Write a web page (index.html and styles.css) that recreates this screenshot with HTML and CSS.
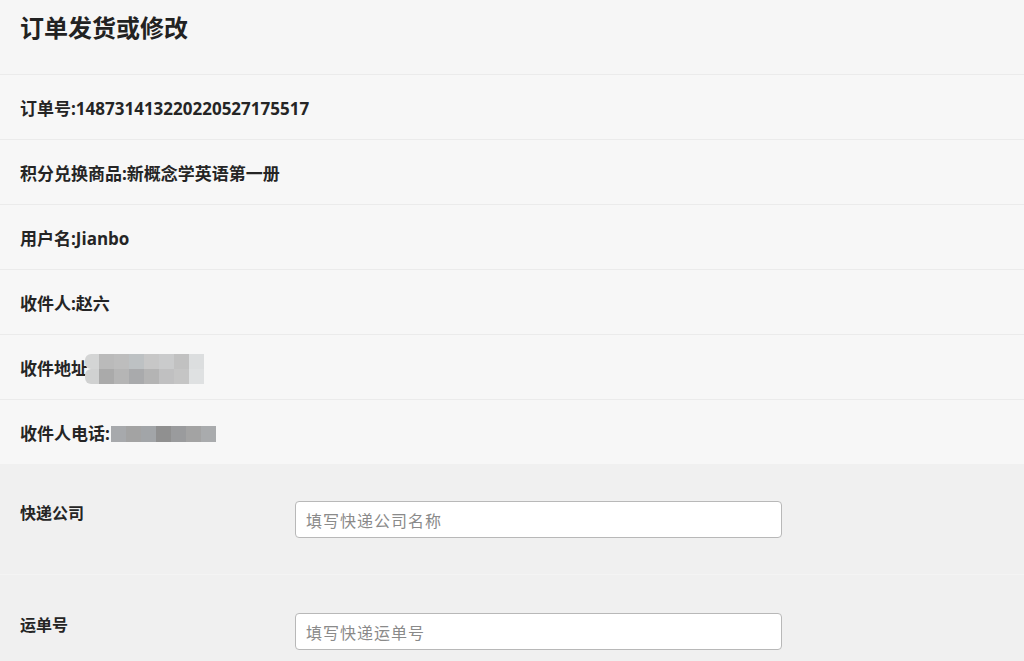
FILE: index.html
```html
<!DOCTYPE html>
<html lang="zh-CN">
<head>
<meta charset="utf-8">
<title>订单发货或修改</title>
<link rel="stylesheet" href="styles.css">
</head>
<body>
<div class="page">
  <header class="head">
    <h1 class="title">订单发货或修改</h1>
  </header>
  <div class="info">
    <div class="row">订单号:148731413220220527175517</div>
    <div class="row">积分兑换商品:新概念学英语第一册</div>
    <div class="row">用户名:Jianbo</div>
    <div class="row">收件人:赵六</div>
    <div class="row">收件地址<span class="mosaic addr">
        <span class="mrow">
          <i class="m first a1"></i><i class="m a2"></i><i class="m a3"></i><i class="m a4"></i><i class="m a5"></i><i class="m a6"></i><i class="m a7"></i><i class="m a8"></i>
        </span>
        <span class="mrow">
          <i class="m first b1"></i><i class="m b2"></i><i class="m b3"></i><i class="m b4"></i><i class="m b5"></i><i class="m b6"></i><i class="m b7"></i><i class="m b8"></i>
        </span>
      </span></div>
    <div class="row">收件人电话:<span class="mosaic phone">
        <span class="mrow">
          <i class="m p1"></i><i class="m p2"></i><i class="m p3"></i><i class="m p4"></i><i class="m p5"></i><i class="m p6"></i><i class="m p7"></i>
        </span>
      </span></div>
  </div>
  <form class="form">
    <div class="frow">
      <label class="flabel" for="company">快递公司</label>
      <input class="finput" id="company" type="text" placeholder="填写快递公司名称">
    </div>
    <div class="frow sep">
      <label class="flabel" for="waybill">运单号</label>
      <input class="finput" id="waybill" type="text" placeholder="填写快递运单号">
    </div>
  </form>
</div>
</body>
</html>
```

FILE: styles.css
```css
* { box-sizing: border-box; }
html, body {
  margin: 0;
  padding: 0;
  background: #f0f0f0;
}
body {
  font-family: "Open Sans", "Noto Sans CJK SC", sans-serif;
  color: #2b2b2b;
  overflow: hidden;
}
.page {
  width: 1024px;
  min-height: 661px;
  display: flex;
  flex-direction: column;
}
.page > * { flex-shrink: 0; }
.head {
  height: 74px;
  background: #f6f6f6;
  padding: 13px 20px 0;
}
.title {
  margin: 0;
  font-size: 24px;
  line-height: 30px;
  font-weight: 700;
  color: #222;
}
.info {
  background: #f7f7f7;
}
.row {
  height: 65px;
  border-top: 1px solid #ebebeb;
  padding: 0 20px;
  display: flex;
  align-items: center;
  font-size: 17px;
  font-weight: 700;
  color: #252525;
}
.mosaic {
  display: inline-flex;
  flex-direction: column;
}
.mosaic.addr { margin-left: -3px; margin-top: 3px; }
.mosaic.phone { margin-left: 1px; margin-top: 3px; }
.mrow { display: flex; }
.m {
  display: block;
  width: 15px;
  height: 15px;
  flex-shrink: 0;
}
.addr .m { height: 15px; }
.addr .m.first { width: 14px; border-radius: 6px 0 0 6px; }
.phone .m { width: 15px; height: 16px; }
.a1 { background: #d4d5d5; }
.a2 { background: #bababa; }
.a3 { background: #bdbdbd; }
.a4 { background: #bdc1c3; }
.a5 { background: #c7c7c7; }
.a6 { background: #cacbcc; }
.a7 { background: #c1c1c1; }
.a8 { background: #dcdedf; }
.b1 { background: #d0d1d1; }
.b2 { background: #aaaaaa; }
.b3 { background: #b5b5b5; }
.b4 { background: #a9aaac; }
.b5 { background: #b4b4b4; }
.b6 { background: #c0c0c1; }
.b7 { background: #c5c5c5; }
.b8 { background: #dfe1e2; }
.p1 { background: #a7a9ac; }
.p2 { background: #a3a3a3; }
.p3 { background: #a2a5a8; }
.p4 { background: #909090; }
.p5 { background: #9a9b9d; }
.p6 { background: #a3a3a3; }
.p7 { background: #a9abad; }
.form {
  margin: 0;
  flex: 1 0 auto;
  background: #f0f0f0;
}
.frow {
  height: 110px;
  padding: 37px 20px 0;
  display: grid;
  grid-template-columns: 275px 487px;
  align-items: start;
}
.frow.sep {
  height: 111px;
  border-top: 1px solid #f4f4f4;
  padding-top: 38px;
}
.flabel {
  font-size: 16px;
  line-height: 24px;
  font-weight: 700;
  color: #252525;
}
.finput {
  width: 487px;
  height: 37px;
  border: 1px solid #b8b8b8;
  border-radius: 4px;
  background: #fff;
  padding: 0 10px;
  font-family: "Noto Sans CJK SC", "Open Sans", sans-serif;
  font-size: 16px;
  letter-spacing: 1px;
  color: #333;
  outline: none;
}
.finput::placeholder {
  color: #8a8a8a;
}
```
